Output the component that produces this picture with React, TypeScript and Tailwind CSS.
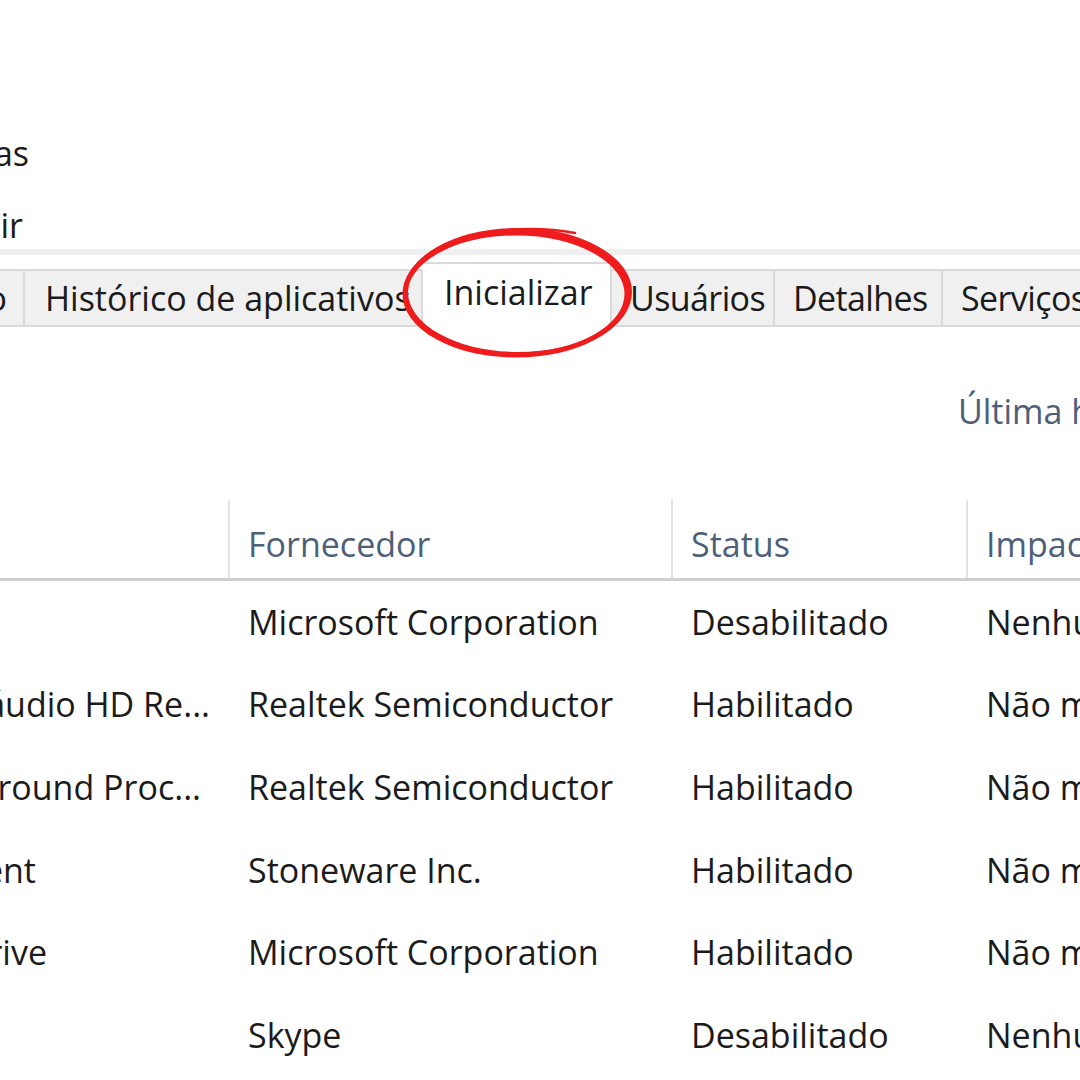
import React from "react";

type Row = {
  name: string;
  nameEnd: string;
  vendor: string;
  status: string;
  impact: string;
};

const rows: Row[] = [
  { name: "", nameEnd: "w-[0px]", vendor: "Microsoft Corporation", status: "Desabilitado", impact: "Nenhum" },
  { name: "Gerenciador de áudio HD Re...", nameEnd: "w-[210px]", vendor: "Realtek Semiconductor", status: "Habilitado", impact: "Não medido" },
  { name: "Realtek HD Audio Background Proc...", nameEnd: "w-[201px]", vendor: "Realtek Semiconductor", status: "Habilitado", impact: "Não medido" },
  { name: "Stoneware Client", nameEnd: "w-[36px]", vendor: "Stoneware Inc.", status: "Habilitado", impact: "Não medido" },
  { name: "Microsoft OneDrive", nameEnd: "w-[47px]", vendor: "Microsoft Corporation", status: "Habilitado", impact: "Não medido" },
  { name: "", nameEnd: "w-[0px]", vendor: "Skype", status: "Desabilitado", impact: "Nenhum" },
];

// text that runs off the left edge: right-aligned inside a clipped box
const ClipLeft = ({ text, width }: { text: string; width: string }) => (
  <div className={`flex shrink-0 justify-end overflow-hidden whitespace-nowrap ${width}`}>
    <span className="shrink-0">{text}</span>
  </div>
);

const Tab = ({ label, width }: { label: string; width: string }) => (
  <div
    className={`flex h-[58px] shrink-0 items-center overflow-hidden whitespace-nowrap border-t-2 border-r-2 border-b-2 border-[#dadada] bg-[#f0f0f0] pl-[18px] tracking-[-0.6px] ${width}`}
  >
    {label}
  </div>
);

export default function App() {
  return (
    <div
      className="relative h-[1080px] w-[1080px] overflow-hidden bg-white text-[34px] text-[#1b1b1b]"
      style={{ fontFamily: '"Open Sans", "Noto Sans", sans-serif' }}
    >
      {/* Title + menu */}
      <div className="pt-[133px]">
        <div className="flex h-[40px] items-center leading-[40px]">
          <ClipLeft text="Gerenciador de Tarefas" width="w-[29px]" />
        </div>
        <div className="mt-[32px] flex h-[40px] items-center leading-[40px]">
          <ClipLeft text="Arquivo  Opções  Exibir" width="w-[23px]" />
        </div>
      </div>

      <div className="mt-[4px] h-[6px] bg-[#efefef]" />

      {/* Tabs */}
      <div className="flex h-[72px] items-end">
        <div className="flex h-[58px] w-[25px] shrink-0 items-center justify-end overflow-hidden whitespace-nowrap border-y-2 border-r-2 border-[#dadada] bg-[#f0f0f0]">
          <span className="shrink-0 pr-[16px]">Desempenho</span>
        </div>
        <div className="flex h-[58px] w-[398px] shrink-0 items-center overflow-hidden whitespace-nowrap border-y-2 border-r-2 border-[#dadada] bg-[#f0f0f0] pl-[20px]">
          Histórico de aplicativos
        </div>
        <div className="flex h-[65px] w-[189px] shrink-0 items-center whitespace-nowrap border-t-2 border-r-2 border-[#dadada] bg-white pb-[6px] pl-[21px]">
          Inicializar
        </div>
        <Tab label="Usuários" width="w-[163px]" />
        <Tab label="Detalhes" width="w-[168px]" />
        <Tab label="Serviços" width="w-[160px]" />
        <div className="h-[2px] flex-1 bg-[#dadada]" />
      </div>

      {/* Last BIOS time */}
      <div className="mt-[64px] flex h-[40px] items-center whitespace-nowrap pl-[958px] text-[#4c607a]">
        Última hora da BIOS
      </div>

      {/* Header */}
      <div className="mt-[69px] flex h-[81px] border-b-[3px] border-[#cfcfcf] text-[#4c607a]">
        <div className="w-[228px] shrink-0" />
        <div className="flex w-[443px] shrink-0 items-center border-l-2 border-[#e2e2e2] pt-[10px] pl-[18px]">
          Fornecedor
        </div>
        <div className="flex w-[295px] shrink-0 items-center border-l-2 border-[#e2e2e2] pt-[10px] pl-[18px]">
          Status
        </div>
        <div className="flex flex-1 items-center whitespace-nowrap border-l-2 border-[#e2e2e2] pt-[10px] pl-[18px]">
          Impacto na inicialização
        </div>
      </div>

      {/* Rows */}
      <div className="flex flex-col">
        {rows.map((r, i) => (
          <div key={i} className="flex h-[82.6px] items-center whitespace-nowrap">
            <div className="w-[228px] shrink-0">
              {r.name && <ClipLeft text={r.name} width={r.nameEnd} />}
            </div>
            <div className="w-[443px] shrink-0 pl-[20px]">{r.vendor}</div>
            <div className="w-[295px] shrink-0 pl-[20px]">{r.status}</div>
            <div className="flex-1 pl-[20px]">{r.impact}</div>
          </div>
        ))}
      </div>

      {/* Red hand-drawn circle */}
      <svg
        className="pointer-events-none absolute left-[395px] top-[215px]"
        width="250"
        height="150"
        viewBox="0 0 250 150"
      >
        <ellipse cx="123" cy="77" rx="112" ry="62" fill="none" stroke="#ee1c1c" strokeWidth="4" />
        <ellipse cx="121" cy="79" rx="111" ry="61" fill="none" stroke="#ee1c1c" strokeWidth="5" />
        <path
          d="M112 15 Q148 12 180 18"
          fill="none"
          stroke="#ee1c1c"
          strokeWidth="2.5"
          strokeLinecap="round"
        />
      </svg>
    </div>
  );
}
